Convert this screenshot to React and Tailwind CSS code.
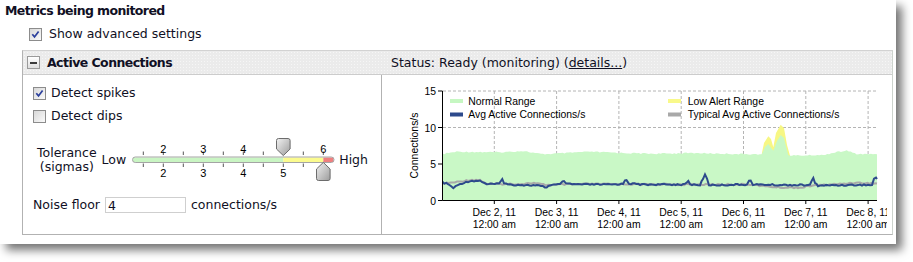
import React from "react";

// deterministic little wobble for the chart lines
const wob = (i, amp) => {
  const s = Math.sin(i * 12.9898) * 43758.5453;
  return (s - Math.floor(s) - 0.5) * 2 * amp;
};

const interp = (keys, step, amp, skip) => {
  const out = [];
  let n = 0;
  for (let k = 0; k < keys.length - 1; k++) {
    const [x0, y0] = keys[k];
    const [x1, y1] = keys[k + 1];
    const segs = Math.max(1, Math.round((x1 - x0) / step));
    for (let s = 0; s < segs; s++) {
      const t = s / segs;
      const x = x0 + (x1 - x0) * t;
      const inSkip = skip && x > skip[0] && x < skip[1];
      out.push([x, y0 + (y1 - y0) * t + (inSkip ? 0 : wob(n++, amp))]);
    }
  }
  out.push(keys[keys.length - 1]);
  return out;
};

const toPath = (pts) => pts.map((p, i) => (i ? "L" : "M") + p[0].toFixed(1) + " " + p[1].toFixed(1)).join(" ");

const BASE = 125.5;
const greenKeys = [
  [60.5, 79], [74.7, 76.7], [118, 77.3], [141, 76], [161, 79.3], [208, 76.7], [241, 78],
  [274.7, 78.7], [308, 78], [354.7, 79], [379.7, 79.3], [383, 72], [386.3, 69], [391.3, 75.7],
  [395, 66], [398.7, 60], [402, 63], [406.3, 80], [408, 80.7], [441.3, 80], [455, 77],
  [464.7, 75.7], [474.7, 79], [495, 79.3],
];
const yellowKeys = [
  [379.7, 79.3], [382, 68], [386.3, 61.3], [389, 64], [391.3, 72.3], [394, 58], [398.7, 49.7],
  [402, 53], [405, 70], [408, 80.7],
];
const blueKeys = [
  [60.5, 107.5], [66, 109], [71.3, 113], [78, 109], [88, 106], [98, 105.7], [104.7, 109], [117, 109],
  [119, 106], [120.3, 103.3], [122, 108], [126, 109.5], [140, 110], [155, 110.5], [164.7, 112.3],
  [168, 110], [178, 109.5], [180.5, 107], [182, 105.7], [184, 109], [200, 109.5], [230, 109.5],
  [241, 109], [243, 105], [244.5, 104.7], [247, 108.5], [260, 109.5], [290, 109.5], [303, 109.5],
  [305, 107], [306.3, 106.3], [308, 109.5], [318, 110], [321, 104], [323, 99], [325, 104], [327, 110],
  [340, 110], [365, 109.5], [367, 106], [368.7, 105.7], [371, 109.5], [400, 110], [428, 110],
  [430, 105], [431.3, 103.3], [433, 108], [436, 110.5], [470, 110], [490, 110], [492, 104],
  [494, 102.3], [495, 104],
];
const grayKeys = [
  [60.5, 108.5], [75, 107], [88, 105], [98, 105], [104.7, 109], [140, 109], [150, 108], [165, 110],
  [200, 109], [300, 109.5], [330, 109.5], [370, 109.5], [385, 111.5], [400, 112.5], [420, 112.5],
  [430, 110.5], [460, 109], [470, 107.8], [480, 108], [495, 108.5],
];

const greenTop = interp(greenKeys, 2, 0.6, [378, 410]);
const greenPath = toPath(greenTop) + ` L495 ${BASE} L60.5 ${BASE} Z`;
const yellowPath = toPath(yellowKeys) + ` L408 ${BASE} L379.7 ${BASE} Z`;
const bluePath = toPath(interp(blueKeys, 2, 0.7));
const grayPath = toPath(interp(grayKeys, 2, 0.7));

const gridX = [0, 1, 2, 3, 4, 5, 6].map((i) => 112.3 + 62.3 * i);
const yv = (v) => BASE - v * 7.3;

function Checkbox({ checked }) {
  return (
    <span className="w-[13px] h-[13px] shrink-0 border border-[#8c8c8c] bg-gradient-to-br from-[#d8d8d8] to-[#fafafa] flex items-center justify-center">
      {checked && (
        <svg width="9" height="9" viewBox="0 0 9 9">
          <path d="M1.3 4.3 L3.5 6.9 L7.6 1.4" stroke="#2b3f9c" strokeWidth="1.7" fill="none" />
        </svg>
      )}
    </span>
  );
}

function ToleranceSlider() {
  const ticks = [];
  for (let i = 0; i < 10; i++) ticks.push(15.3 + 20 * i);
  return (
    <svg width="210" height="46" className="shrink-0">
      <defs>
        <linearGradient id="thumb" x1="0" y1="0" x2="1" y2="1">
          <stop offset="0" stopColor="#f2f2f2" />
          <stop offset="1" stopColor="#9c9c9c" />
        </linearGradient>
      </defs>
      {ticks.map((x) => (
        <g key={x} stroke="#555">
          <line x1={x} y1="14.5" x2={x} y2="18" />
          <line x1={x} y1="26.5" x2={x} y2="30" />
        </g>
      ))}
      <g fontFamily="Liberation Sans, Arial, sans-serif" fontSize="11" fill="#000" textAnchor="middle">
        <text x="35.3" y="16">2</text>
        <text x="75.3" y="16">3</text>
        <text x="115.3" y="16">4</text>
        <text x="195.3" y="16">6</text>
        <text x="35.3" y="40">2</text>
        <text x="75.3" y="40">3</text>
        <text x="115.3" y="40">4</text>
        <text x="155.3" y="40">5</text>
      </g>
      <rect x="5" y="20.5" width="150.3" height="4.5" fill="#c9f5c3" />
      <rect x="155.3" y="20.5" width="40" height="4.5" fill="#fbfb8e" />
      <rect x="195.3" y="20.5" width="10.2" height="4.5" fill="#ef7f7f" />
      <rect x="4.5" y="20" width="201.5" height="5.5" rx="2.7" fill="none" stroke="#a4a4a4" />
      <path
        d="M148.5 3.5 Q148.5 1.5 150.5 1.5 H160.1 Q162.1 1.5 162.1 3.5 V12 L155.3 18.6 L148.5 12 Z"
        fill="url(#thumb)"
        stroke="#6c6c6c"
      />
      <path
        d="M188.5 32 L195.3 25.4 L202.1 32 V41.5 Q202.1 43.5 200.1 43.5 H190.5 Q188.5 43.5 188.5 41.5 Z"
        fill="url(#thumb)"
        stroke="#6c6c6c"
      />
    </svg>
  );
}

function Chart() {
  return (
    <svg width="510" height="159" className="block">
      <defs>
        <clipPath id="plotclip">
          <rect x="0" y="0" width="505" height="159" />
        </clipPath>
      </defs>
      {/* grid */}
      <g stroke="#b4b4b4" strokeDasharray="3 2" strokeWidth="1">
        {[5, 10, 15].map((v) => (
          <line key={v} x1="61" y1={yv(v)} x2="494" y2={yv(v)} />
        ))}
        {gridX.map((x) => (
          <line key={x} x1={x} y1={yv(15)} x2={x} y2={BASE} />
        ))}
      </g>
      {/* areas */}
      <path d={yellowPath} fill="#f7f784" />
      <path d={greenPath} fill="#c9f8c6" />
      <path d={grayPath} fill="none" stroke="#a9a9a9" strokeWidth="2" />
      <path d={bluePath} fill="none" stroke="#2d4a8c" strokeWidth="2" />
      {/* axes */}
      <g stroke="#000" strokeWidth="1">
        <line x1="60.5" y1={yv(15)} x2="60.5" y2={BASE} />
        <line x1="60.5" y1={BASE} x2="495" y2={BASE} />
        {[0, 5, 10, 15].map((v) => (
          <line key={v} x1="56" y1={yv(v)} x2="60.5" y2={yv(v)} />
        ))}
        {gridX.map((x) => (
          <line key={x} x1={x} y1={BASE} x2={x} y2={BASE + 3.5} />
        ))}
      </g>
      <g fontFamily="Liberation Sans, Arial, sans-serif" fontSize="10.4" fill="#000">
        {[0, 5, 10, 15].map((v) => (
          <text key={v} x="54" y={yv(v) + 4} textAnchor="end">
            {v}
          </text>
        ))}
        <text x="36" y="70.5" textAnchor="middle" transform="rotate(-90 36 70.5)">
          Connections/s
        </text>
        <g clipPath="url(#plotclip)" textAnchor="middle">
          {gridX.map((x, i) => (
            <g key={x}>
              <text x={x} y="140.7">{`Dec ${i + 2}, 11`}</text>
              <text x={x} y="153.3">12:00 am</text>
            </g>
          ))}
        </g>
        <rect x="68" y="24" width="13" height="4" fill="#c6f7c2" />
        <text x="86.3" y="30">Normal Range</text>
        <rect x="68" y="37.5" width="13" height="4" fill="#2d4a8c" />
        <text x="86.3" y="43.3">Avg Active Connections/s</text>
        <rect x="286" y="24" width="13" height="4" fill="#f9f98a" />
        <text x="305.7" y="30">Low Alert Range</text>
        <rect x="286" y="37.5" width="13" height="4" fill="#a9a9a9" />
        <text x="305.7" y="43.3">Typical Avg Active Connections/s</text>
      </g>
    </svg>
  );
}

export default function App() {
  return (
    <div className="w-[913px] h-[262px] bg-white font-['DejaVu_Sans',sans-serif] text-[12.5px] text-[#101024]">
      <div className="w-[896px] h-[244px] bg-white shadow-[6px_6px_9px_rgba(0,0,0,0.55)] overflow-hidden">
        <div className="pl-[5px] pt-[3px] leading-[16px] font-bold tracking-[-0.6px]">
          Metrics being monitored
        </div>
        <div className="ml-[29px] mt-[7px] flex items-center gap-[7px] leading-[16px]">
          <Checkbox checked />
          <span>Show advanced settings</span>
        </div>

        {/* metric panel */}
        <div className="ml-[22px] mt-[8px] w-[871px] border border-[#b2b2b2] border-t-[#d2d2d2] border-r-[#cdd3cd]">
          <div className="h-[24px] flex items-center border-b border-[#cccccc] bg-[#ebebeb] bg-[radial-gradient(circle,#f6f6f6_0.7px,transparent_0.9px)] bg-[length:3px_3px] leading-[16px]">
            <div className="w-[359px] flex items-center pl-[4px] gap-[7px]">
              <span className="w-[13px] h-[13px] border border-[#9a9a9a] bg-gradient-to-b from-white to-[#dedede] flex items-center justify-center">
                <span className="w-[7px] h-[2px] bg-[#3a3a3a]" />
              </span>
              <span className="font-bold tracking-[-0.55px]">Active Connections</span>
            </div>
            <div className="pl-[9px]">
              Status: Ready (monitoring) (<span className="underline">details...</span>)
            </div>
          </div>

          <div className="flex h-[159px]">
            <div className="w-[359px] border-r border-[#b2b2b2] pl-[10px] pt-[10px] leading-[16px]">
              <div className="flex items-center gap-[5px]">
                <Checkbox checked />
                <span>Detect spikes</span>
              </div>
              <div className="flex items-center gap-[5px] mt-[7px]">
                <Checkbox />
                <span>Detect dips</span>
              </div>

              <div className="mt-[13px] h-[46px] flex items-center">
                <div className="ml-[4px] leading-[14px] text-center">
                  <div>Tolerance</div>
                  <div>(sigmas)</div>
                </div>
                <span className="ml-[5px]">Low</span>
                <span className="ml-[2px] flex">
                  <ToleranceSlider />
                </span>
                <span className="ml-[1px]">High</span>
              </div>

              <div className="mt-[14px] flex items-center gap-[5px]">
                <span>Noise floor</span>
                <input
                  readOnly
                  value="4"
                  className="w-[81px] h-[16px] border border-[#cfcfcf] bg-white px-[2px] text-[12.5px] leading-[14px] outline-none"
                />
                <span>connections/s</span>
              </div>
            </div>

            <div className="w-[510px]">
              <Chart />
            </div>
          </div>
        </div>
      </div>
    </div>
  );
}
